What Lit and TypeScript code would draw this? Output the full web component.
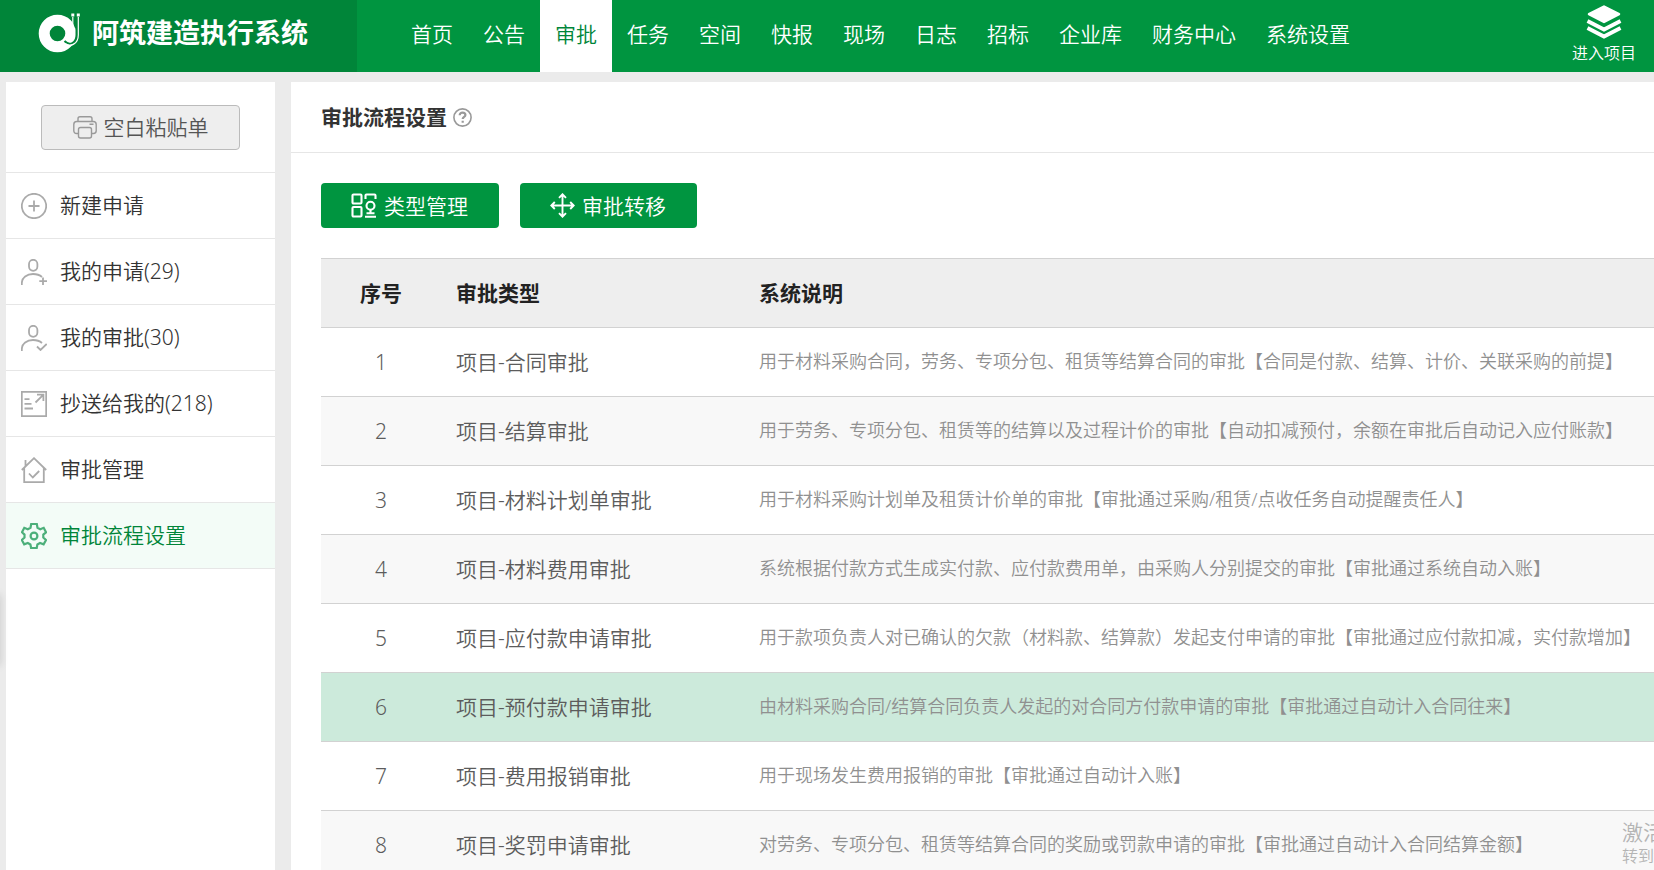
import { LitElement, html, css, svg } from "lit";
import { customElement, state } from "lit/decorators.js";
import { classMap } from "lit/directives/class-map.js";

interface Row {
  type: string;
  note: string;
}

const NAV = ["首页", "公告", "审批", "任务", "空间", "快报", "现场", "日志", "招标", "企业库", "财务中心", "系统设置"];

const ROWS: Row[] = [
  { type: "项目-合同审批", note: "用于材料采购合同，劳务、专项分包、租赁等结算合同的审批【合同是付款、结算、计价、关联采购的前提】" },
  { type: "项目-结算审批", note: "用于劳务、专项分包、租赁等的结算以及过程计价的审批【自动扣减预付，余额在审批后自动记入应付账款】" },
  { type: "项目-材料计划单审批", note: "用于材料采购计划单及租赁计价单的审批【审批通过采购/租赁/点收任务自动提醒责任人】" },
  { type: "项目-材料费用审批", note: "系统根据付款方式生成实付款、应付款费用单，由采购人分别提交的审批【审批通过系统自动入账】" },
  { type: "项目-应付款申请审批", note: "用于款项负责人对已确认的欠款（材料款、结算款）发起支付申请的审批【审批通过应付款扣减，实付款增加】" },
  { type: "项目-预付款申请审批", note: "由材料采购合同/结算合同负责人发起的对合同方付款申请的审批【审批通过自动计入合同往来】" },
  { type: "项目-费用报销审批", note: "用于现场发生费用报销的审批【审批通过自动计入账】" },
  { type: "项目-奖罚申请审批", note: "对劳务、专项分包、租赁等结算合同的奖励或罚款申请的审批【审批通过自动计入合同结算金额】" },
];

const ICONS = {
  plus: svg`<circle cx="13" cy="13" r="12.2"/><path d="M13 7.5v11M7.5 13h11"/>`,
  userPlus: svg`<rect x="8" y="0.8" width="8.4" height="11" rx="4.2"/><path d="M0.8 26v-1.5C0.8 18.5 6 15 12 15c3.5 0 6.5 0.8 9 3M22 18.5v7.5M18.3 22.2H26"/>`,
  userCheck: svg`<rect x="8" y="0.8" width="8.4" height="11" rx="4.2"/><path d="M0.8 26v-1.5C0.8 18.5 6 15 12 15c3.5 0 6.5 0.8 9 3M16 21.5l3.5 3.5 6.2-6"/>`,
  share: svg`<path d="M0.8 0.8h24.4v24.4H0.8zM3.5 8.2h5M3.5 12.8h7M3.5 17.5h8.5M14.5 11.5l7.7-7.7M16 3.6h6.4V10"/>`,
  house: svg`<path d="M0.8 13L13 1.2 25.2 13M3.2 11v14.2h19.6V11M4.5 9V3M8 16.5l3.8 4 6.4-6.5"/>`,
  gear: svg`<path d="M10.2 1h5.6l0.7 3.8 2.7 1.5 3.5-1.5 2.3 4.5-2.7 2.3v3l2.7 2.4-2.4 4.4-3.6-1.4-2.6 1.5-0.7 3.5h-5.6l-0.7-3.5-2.6-1.5-3.6 1.4-2.4-4.4 2.7-2.4v-3L1 9.3l2.3-4.5 3.5 1.5 2.7-1.5z"/><circle cx="13" cy="13" r="3.4"/>`,
};

const SIDE = [
  { icon: ICONS.plus, text: "新建申请" },
  { icon: ICONS.userPlus, text: "我的申请(29)" },
  { icon: ICONS.userCheck, text: "我的审批(30)" },
  { icon: ICONS.share, text: "抄送给我的(218)" },
  { icon: ICONS.house, text: "审批管理" },
  { icon: ICONS.gear, text: "审批流程设置" },
];

@customElement("app-root")
export class AppRoot extends LitElement {
  @state() private nav = 2;
  @state() private side = 5;
  @state() private picked = 5;

  static styles = css`
    :host {
      display: flex;
      flex-direction: column;
      position: relative;
      height: 100vh;
      overflow: hidden;
      background: #ebebeb;
      color: #333;
      font-family: "Noto Sans", "Noto Sans CJK SC", sans-serif;
      font-size: 21px;
      font-weight: 350;
      line-height: 30px;
    }
    * { box-sizing: border-box; }
    a { color: inherit; text-decoration: none; }
    svg { display: block; flex: none; fill: none; stroke: currentColor; }
    button { font: inherit; cursor: pointer; }
    ul { list-style: none; margin: 0; padding: 0; }

    .top { display: flex; flex: none; height: 72px; background: #009540; color: #fff; }
    .brand {
      display: flex; align-items: center; gap: 12px; flex: none;
      width: 357px; padding: 0 0 6px 38px;
      background: #008539;
      font-size: 27px; font-weight: 700; line-height: 36px;
    }
    .nav { display: flex; flex: 1; padding-left: 39px; }
    .nav a { display: flex; align-items: center; height: 100%; padding: 0 15px 4px; white-space: nowrap; }
    .nav a.on { background: #fff; color: #008539; }
    .enter {
      display: flex; flex-direction: column; align-items: center; gap: 3px;
      padding: 5px 18px 0 0; font-size: 16px; line-height: 22px;
    }

    .body { display: flex; flex: 1; gap: 16px; min-height: 0; padding: 10px 0 0 6px; }
    .side { flex: none; width: 269px; background: #fff; }
    .paste { padding: 23px 35px 22px; border-bottom: 1px solid #e6e6e6; }
    .paste button {
      display: flex; align-items: center; justify-content: center; gap: 7px;
      width: 100%; height: 45px; padding: 0;
      background: #eee; border: 1px solid #bbb; border-radius: 4px; color: #555;
    }
    .paste span, .side li span { padding-bottom: 2px; }
    .paste svg { color: #999; }
    .side li { border-bottom: 1px solid #e6e6e6; }
    .side li a { display: flex; align-items: center; gap: 13px; height: 65px; padding: 0 15px; }
    .side li svg { color: #aaa; stroke-width: 1.8; }
    .side li a.on { background: #f3fcf7; color: #008539; }
    .side li a.on svg { color: #4caf7a; stroke-width: 2.2; }

    .main { flex: 1; min-width: 0; background: #fff; overflow: hidden; }
    .head { display: flex; align-items: center; gap: 6px; height: 71px; padding: 0 30px; border-bottom: 1px solid #e6e6e6; }
    h1 { margin: 0; font-size: 21px; font-weight: 700; line-height: 30px; }
    .help { padding: 0; border: 0; background: none; color: #999; }
    .tools { display: flex; gap: 21px; padding: 30px; }
    .tools button {
      display: flex; align-items: center; gap: 7px; height: 45px; padding: 0 31px 0 30px;
      border: 0; border-radius: 4px; background: #009540; color: #fff;
    }

    .wrap { padding-left: 30px; }
    table { width: 100%; border-collapse: collapse; table-layout: fixed; }
    th, td { height: 69px; padding: 0 0 0 15px; border-top: 1px solid #d2d2d2; text-align: left; white-space: nowrap; }
    th { background: #eee; color: #222; font-weight: 700; }
    td { color: #5c5c5c; }
    .no { width: 120px; padding: 0; text-align: center; }
    .type { width: 303px; }
    td.note { padding-bottom: 2px; font-size: 18px; color: #909090; }
    tbody tr:nth-child(even) { background: #f8f8f8; }
    tbody tr.picked { background: #cceadb; }

    .handle {
      position: absolute; left: -10px; top: 595px; width: 10px; height: 70px;
      box-shadow: 0 0 8px rgba(0, 0, 0, 0.15);
    }
    .mark {
      position: absolute; left: calc(100% - 32px); right: 0; bottom: 3px; overflow: hidden;
      color: #b4b4b4; white-space: nowrap; pointer-events: none; line-height: 22px; font-size: 16px;
    }
    .mark strong { display: block; font-size: 21px; font-weight: 350; line-height: 26px; }
  `;

  private brand() {
    return html`<svg width="42" height="40" viewBox="0 0 42 40" aria-hidden="true">
      <circle cx="19.5" cy="20.5" r="13.3" stroke-width="11" />
      <path d="M32 3h10v12h-5z" fill="#008539" stroke="none" />
      <path d="M38.5 6v16c0 8-7 11.5-12 6" stroke="#008539" stroke-width="2" />
      <path d="M40.3 4v18c0 9-8 12.5-13 8.5M34.8 4v16" stroke-width="1.2" />
      <path d="M33.3 2h3M38.8 2h3" stroke-width="3" />
    </svg>`;
  }

  render() {
    return html`
      <header class="top">
        <div class="brand">${this.brand()}<span>阿筑建造执行系统</span></div>
        <nav class="nav">
          ${NAV.map((t, i) => html`<a href="#" class=${classMap({ on: i === this.nav })} @click=${() => (this.nav = i)}>${t}</a>`)}
        </nav>
        <a class="enter" href="#">
          <svg width="36" height="34" viewBox="0 0 36 34" aria-hidden="true">
            <path d="M18 1.5L33 9.2 18 17 3 9.2z" fill="currentColor" stroke-width="2.5" stroke-linejoin="round" />
            <path d="M1.5 16L18 24.5 34.5 16M1.5 23L18 31.5 34.5 23" stroke-width="3.8" />
          </svg>
          进入项目
        </a>
      </header>
      <div class="body">
        <aside class="side">
          <div class="paste">
            <button>
              <svg width="24" height="23" viewBox="0 0 24 23" stroke-width="1.4" aria-hidden="true">
                <path d="M5 5.5V2.7C5 1.5 6 0.8 7 0.8h10c1.2 0 2 0.9 2 1.9v2.8M5.5 17.5H3.5c-1.6 0-2.7-1.1-2.7-2.7V8.5c0-1.7 1.2-3 2.9-3h16.6c1.7 0 2.9 1.3 2.9 3v6.3c0 1.6-1.1 2.7-2.7 2.7h-2M16.5 8.2h4" />
                <rect x="5.5" y="11.5" width="13" height="10.5" rx="2" />
              </svg>
              <span>空白粘贴单</span>
            </button>
          </div>
          <ul>
            ${SIDE.map(
              (s, i) => html`<li>
                <a href="#" class=${classMap({ on: i === this.side })} @click=${() => (this.side = i)}>
                  <svg width="26" height="26" viewBox="0 0 26 26" aria-hidden="true">${s.icon}</svg>
                  <span>${s.text}</span>
                </a>
              </li>`
            )}
          </ul>
        </aside>
        <main class="main">
          <div class="head">
            <h1>审批流程设置</h1>
            <button class="help" aria-label="帮助">
              <svg width="19" height="19" viewBox="0 0 19 19" aria-hidden="true">
                <circle cx="9.5" cy="9.5" r="8.6" stroke-width="1.6" />
                <path d="M6.7 7.2c0-1.6 1.2-2.5 2.8-2.5s2.9 0.9 2.9 2.4c0 1.9-2.7 1.9-2.7 4M9.7 12.7v2" stroke-width="2.2" />
              </svg>
            </button>
          </div>
          <div class="tools">
            <button>
              <svg width="26" height="25" viewBox="0 0 26 25" stroke-width="2.1" aria-hidden="true">
                <rect x="1.5" y="1.5" width="9" height="9" rx="1" />
                <rect x="1.5" y="14" width="9" height="9.5" rx="1" />
                <path d="M14.5 6V2.5c0-0.6 0.4-1 1-1h8c0.6 0 1 0.4 1 1V6M14 23.7h11M15.5 20.2h8M19.5 16.5v4" />
                <circle cx="19.5" cy="12.7" r="4" />
              </svg>
              类型管理
            </button>
            <button>
              <svg width="25" height="25" viewBox="0 0 25 25" stroke-width="1.9" aria-hidden="true">
                <path d="M12.5 1.5v22M1.5 12.5h22M9 4.8l3.5-3.5L16 4.8M9 20.2l3.5 3.5 3.5-3.5M4.8 9l-3.5 3.5L4.8 16M20.2 9l3.5 3.5-3.5 3.5" />
              </svg>
              审批转移
            </button>
          </div>
          <div class="wrap">
            <table>
              <thead>
                <tr><th class="no">序号</th><th class="type">审批类型</th><th>系统说明</th></tr>
              </thead>
              <tbody>
                ${ROWS.map(
                  (r, i) => html`<tr class=${classMap({ picked: i === this.picked })} @click=${() => (this.picked = i)}>
                    <td class="no">${i + 1}</td>
                    <td class="type">${r.type}</td>
                    <td class="note">${r.note}</td>
                  </tr>`
                )}
              </tbody>
            </table>
          </div>
        </main>
      </div>
      <div class="handle"></div>
      <div class="mark"><strong>激活</strong>转到“</div>
    `;
  }
}
